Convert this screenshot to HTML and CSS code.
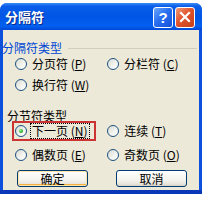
FILE: index.html
```html
<!DOCTYPE html>
<html lang="zh-CN">
<head>
    <meta charset="UTF-8">
    <title>分隔符</title>
    <link rel="stylesheet" href="styles.css">
</head>
<body>

    <div class="window">
        <div class="titlebar">
            <span class="title">分隔符</span>
            <span class="tb-btn help">?</span>
            <span class="tb-btn close">
                <svg width="12" height="12" viewBox="0 0 12 12"><path d="M2 2 L10 10 M10 2 L2 10" stroke="#fff" stroke-width="2.2" stroke-linecap="square"/></svg>
            </span>
        </div>

        <div class="client">
            <div class="legend legend-first">
                <span>分隔符类型</span>
                <div class="legend-line"></div>
            </div>
            <div class="row row-1">
                <label class="opt"><span class="radio"></span>分页符 (<u>P</u>)</label>
                <label class="opt"><span class="radio"></span>分栏符 (<u>C</u>)</label>
            </div>
            <div class="row row-2">
                <label class="opt"><span class="radio"></span>换行符 (<u>W</u>)</label>
            </div>

            <div class="legend legend-second">
                <span>分节符类型</span>
            </div>
            <div class="row row-3">
                <label class="opt marked"><span class="radio checked"></span><span class="focus">下一页 (<u>N</u>)</span></label>
                <label class="opt"><span class="radio"></span>连续 (<u>T</u>)</label>
            </div>
            <div class="row row-4">
                <label class="opt"><span class="radio"></span>偶数页 (<u>E</u>)</label>
                <label class="opt"><span class="radio"></span>奇数页 (<u>O</u>)</label>
            </div>

            <div class="buttons">
                <button class="btn default">确定</button>
                <button class="btn">取消</button>
            </div>
        </div>
    </div>

</body>
</html>
```

FILE: styles.css
```css
body {
    margin: 0;
    background-color: #fff;
    font-family: "Noto Sans CJK SC", "DejaVu Sans", sans-serif;
    font-size: 12px;
    color: #000;
}

.window {
    width: 202px;
    margin-top: 3px;
    background-color: #0c50dc;
    border-radius: 7px 7px 0 0;
    padding-bottom: 4px;
    box-shadow: inset 0 -4px 0 #0a36b8;
}

.titlebar {
    height: 27px;
    display: flex;
    align-items: center;
    padding: 0 7px 0 5px;
    border-radius: 7px 7px 0 0;
    background: linear-gradient(to bottom, #3d8ef7 0%, #0a5ee9 12%, #0055e5 50%, #0360f0 85%, #0048d8 100%);
}

.title {
    flex-grow: 1;
    color: #fff;
    font-weight: bold;
    font-size: 13px;
    line-height: 16px;
    text-shadow: 1px 1px 0 #0a2a8a;
}

.tb-btn {
    width: 18px;
    height: 19px;
    border: 1px solid #fff;
    border-radius: 3px;
    display: flex;
    align-items: center;
    justify-content: center;
    margin-top: 1px;
}

.help {
    margin-right: 2px;
    color: #fff;
    font-family: "Liberation Sans", sans-serif;
    font-weight: bold;
    font-size: 15px;
    background: linear-gradient(135deg, #6aa8ff 0%, #2a6ff0 45%, #1450d8 100%);
}

.close {
    background: linear-gradient(135deg, #f09a78 0%, #e0552e 45%, #c63d18 100%);
}

.client {
    margin: 0 3px;
    height: 160px;
    background-color: #ece9d8;
    padding-top: 11px;
    box-sizing: border-box;
    display: flex;
    flex-direction: column;
}

.legend {
    display: flex;
    align-items: center;
    height: 14px;
    line-height: 14px;
}

.legend-first {
    margin-left: -1px;
    color: #0046d5;
}

.legend-line {
    flex-grow: 1;
    margin: 1px 2px 0 6px;
    border-top: 1px solid #d0d0bf;
}

.legend-second {
    margin-top: 17px;
    margin-left: 4px;
}

.row {
    display: flex;
    height: 14px;
    padding-left: 12px;
}

.row-1 { margin-top: 2px; }
.row-2 { margin-top: 7px; }
.row-3 { margin-top: 1px; }
.row-4 { margin-top: 10px; }

.opt {
    display: flex;
    align-items: center;
    width: 96px;
    line-height: 14px;
    white-space: nowrap;
}

.opt u {
    text-underline-offset: 1px;
}

.marked {
    width: 82px;
    margin-right: 14px;
    outline: 2px solid #cc3333;
    outline-offset: 1px;
}

.focus {
    outline: 1px dotted #000;
    outline-offset: 0;
    padding: 0 1px;
    margin-left: -1px;
}

.radio {
    position: relative;
    width: 10px;
    height: 10px;
    margin-right: 5px;
    border: 1px solid #1c5180;
    border-radius: 50%;
    background: linear-gradient(135deg, #dcdcd3 0%, #f2f2ee 55%, #fff 100%);
    flex-shrink: 0;
}

.radio.checked::after {
    content: "";
    position: absolute;
    left: 3px;
    top: 3px;
    width: 4px;
    height: 4px;
    border-radius: 50%;
    background: radial-gradient(circle at 35% 35%, #a2f0a0 0%, #3cc03a 45%, #0d8a0d 100%);
}

.buttons {
    display: flex;
    gap: 28px;
    margin-top: 8px;
    padding-left: 14px;
}

.btn {
    width: 71px;
    height: 17px;
    padding: 0;
    border: 1px solid #003c74;
    border-radius: 3px;
    background: linear-gradient(to bottom, #fff 0%, #f4f3ee 60%, #e6e3d8 88%, #d6d0c5 100%);
    font-family: "Noto Sans CJK SC", sans-serif;
    font-size: 12px;
    line-height: 15px;
    color: #000;
}

.btn.default {
    box-shadow: inset 0 0 0 1px #ffe6a6, inset 0 -2px 0 #f5b041;
}
```
